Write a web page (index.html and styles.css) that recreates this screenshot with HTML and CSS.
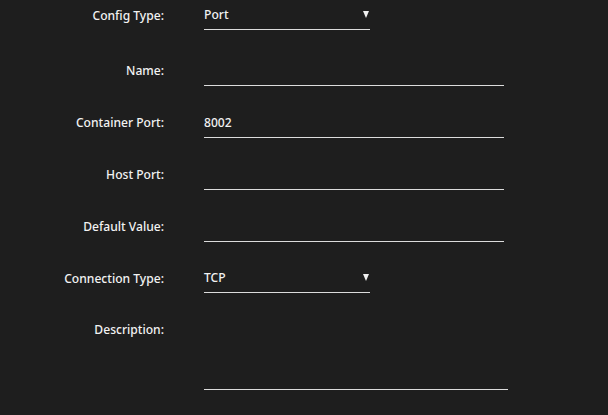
FILE: index.html
```html
<!DOCTYPE html>
<html>
<head>
<meta charset="utf-8">
<link rel="stylesheet" href="styles.css">
</head>
<body>
<form class="form">
  <div class="row row-first">
    <label class="label">Config Type:</label>
    <div class="select"><span class="value">Port</span><span class="arrow"></span></div>
  </div>
  <div class="row row-name">
    <label class="label">Name:</label>
    <div class="input"></div>
  </div>
  <div class="row">
    <label class="label">Container Port:</label>
    <div class="input"><span class="value">8002</span></div>
  </div>
  <div class="row">
    <label class="label">Host Port:</label>
    <div class="input"></div>
  </div>
  <div class="row">
    <label class="label">Default Value:</label>
    <div class="input"></div>
  </div>
  <div class="row row-conn">
    <label class="label">Connection Type:</label>
    <div class="select"><span class="value">TCP</span><span class="arrow"></span></div>
  </div>
  <div class="row row-desc">
    <label class="label">Description:</label>
    <div class="textarea"></div>
  </div>
</form>
</body>
</html>
```
FILE: styles.css
```css
html, body {
  margin: 0;
  padding: 0;
  background: #1e1e1e;
  height: 100%;
  overflow: hidden;
}
body {
  font-family: "Noto Sans", "Open Sans", sans-serif;
  font-size: 12.1px;
  font-weight: 500;
  color: #f2f2f2;
}
.form {
  display: flex;
  flex-direction: column;
  gap: 22px;
  padding-top: 1px;
}
.row {
  display: flex;
  align-items: center;
  gap: 40px;
}
.row-name {
  margin-top: 4px;
}
.label {
  width: 164px;
  text-align: right;
  flex: none;
  line-height: 16px;
}
.select,
.input,
.textarea {
  box-sizing: border-box;
  border-bottom: 1px solid #dcdcdc;
  display: flex;
  align-items: center;
}
.select {
  width: 166px;
  height: 29px;
  justify-content: space-between;
  padding-right: 1px;
}
.input {
  width: 300px;
  height: 30px;
}
.row-desc {
  align-items: flex-start;
}
.row-desc .label {
  padding-top: 7px;
}
.textarea {
  width: 304px;
  height: 75px;
}
.value {
  line-height: 16px;
}
.arrow {
  width: 0;
  height: 0;
  border-left: 3.5px solid transparent;
  border-right: 3.5px solid transparent;
  border-top: 7px solid #f0f0f0;
  margin-top: -2px;
}
```
